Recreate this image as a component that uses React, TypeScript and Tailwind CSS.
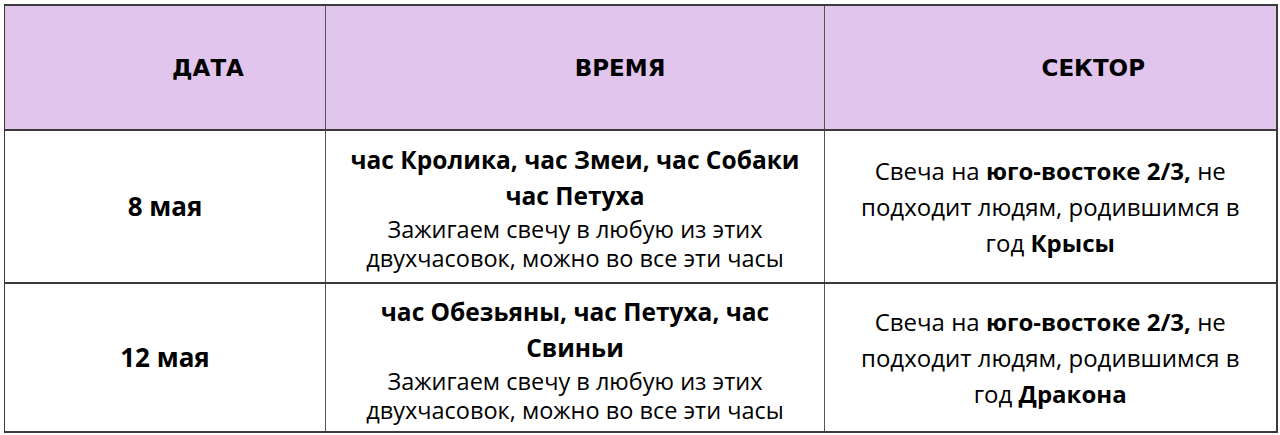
export default function App() {
  const body = "font-['Open_Sans','Liberation_Sans',sans-serif] text-black";
  const head = "font-['DejaVu_Sans','Liberation_Sans',sans-serif] font-bold text-[23px] text-black pt-[2px]";

  const rows = [
    {
      date: "8 мая",
      hours: ["час Кролика, час Змеи, час Собаки", "час Петуха"],
      sign: "Крысы",
      pt: "pt-[11px]",
    },
    {
      date: "12 мая",
      hours: ["час Обезьяны, час Петуха, час", "Свиньи"],
      sign: "Дракона",
      pt: "pt-[10px]",
    },
  ];

  return (
    <div className="w-[1280px] h-[435px] bg-white pt-[4px] pl-[4px]">
      <table className="w-[1272px] border-collapse border-t-[2px] border-r-[2px] border-b-[2px] border-l border-[#3a3a3a] table-fixed">
        <colgroup>
          <col className="w-[321px]" />
          <col className="w-[499px]" />
          <col className="w-[452px]" />
        </colgroup>
        <thead>
          <tr className="h-[125px] bg-[#e2c5ec] border-b-[2px] border-[#3a3a3a]">
            <th className={`${head} border-r border-[#555] pl-[86px]`}>ДАТА</th>
            <th className={`${head} border-r border-[#555] pl-[90px]`}>ВРЕМЯ</th>
            <th className={`${head} pl-[86px]`}>СЕКТОР</th>
          </tr>
        </thead>
        <tbody>
          {rows.map((r, i) => (
            <tr
              key={r.date}
              className={`${i === 0 ? "h-[153px] border-b-[2px] border-[#3a3a3a]" : "h-[149px]"}`}
            >
              <td className={`${body} border-r border-[#555] text-center font-bold text-[26px]`}>
                {r.date}
              </td>
              <td className={`${body} border-r border-[#555] text-center align-top ${r.pt}`}>
                {r.hours.map((h) => (
                  <div key={h} className="font-bold text-[24.5px] leading-[36px]">
                    {h}
                  </div>
                ))}
                <div className="text-[23.5px] leading-[29px] mt-[1px]">
                  Зажигаем свечу в любую из этих
                  <br />
                  двухчасовок, можно во все эти часы
                </div>
              </td>
              <td className={`${body} text-center text-[24px] leading-[36px] px-[6px] pt-[1px]`}>
                Свеча на <b>юго-востоке 2/3,</b> не
                <br />
                подходит людям, родившимся в
                <br />
                год <b>{r.sign}</b>
              </td>
            </tr>
          ))}
        </tbody>
      </table>
    </div>
  );
}
